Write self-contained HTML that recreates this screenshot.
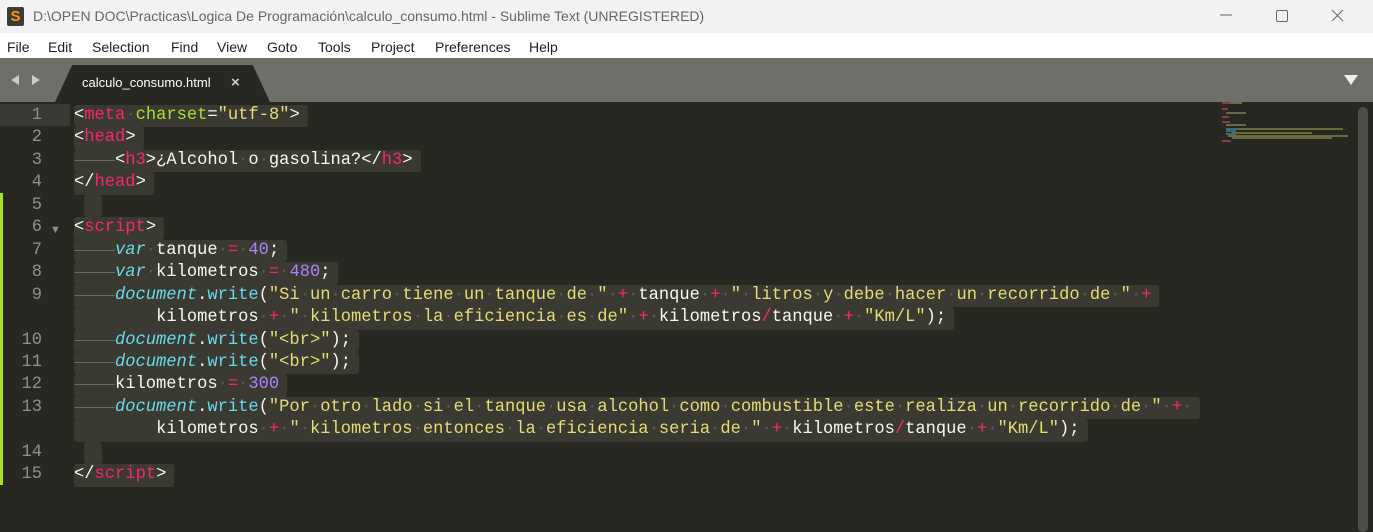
<!DOCTYPE html>
<html><head><meta charset="utf-8">
<style>
*{margin:0;padding:0;box-sizing:border-box}
body{width:1373px;height:532px;overflow:hidden;background:#272822;font-family:"Liberation Sans",sans-serif;position:relative}
#title{position:absolute;left:0;top:0;width:1373px;height:33px;background:#f2f2f2;color:#666;font-size:14px;line-height:33px}
#title .logo{position:absolute;left:7px;top:7px;width:17px;height:19px;background:#3b3b3b;border-radius:2px;color:#ff9800;font-weight:bold;font-size:15px;line-height:19px;text-align:center}
#title .t{position:absolute;left:33px;top:0}
#menu{position:absolute;left:0;top:33px;width:1373px;height:25px;background:#fff;font-size:14px;color:#222;line-height:28px}
#menu span{position:absolute;top:0}
#tabbar{position:absolute;left:0;top:58px;width:1373px;height:44px;background:#6f6e68}
#tab{position:absolute;left:55px;top:65px;width:215px;height:37px;background:#272822;clip-path:polygon(8% 0,92% 0,100% 100%,0 100%);}
#tabt{position:absolute;left:82px;top:75px;color:#fff;font-size:13px}
#tabx{position:absolute;left:231px;top:74px;color:#ccc;font-size:15px;font-weight:bold}
.code{position:absolute;left:0;font-family:"Liberation Mono",monospace;font-size:17.1px;line-height:22.45px;height:22.45px;white-space:pre;color:#f8f8f2}
.ln{position:absolute;left:0;width:42px;text-align:right;color:#8f908a}
.c{position:absolute;left:74px;background:#3a3a32;padding-right:8px;border-radius:3px}
.p{color:#f92672}.g{color:#a6e22e}.y{color:#e6db74}.b{color:#66d9ef}.i{color:#66d9ef;font-style:italic}.n{color:#ae81ff}
.d{color:#5a5a50}
.tb{display:inline-block;width:41px;height:10px;border-bottom:1px solid #6a6a60;vertical-align:top;margin-top:1px}
</style></head><body>
<div id="title"><div class="logo">S</div><span class="t">D:\OPEN DOC\Practicas\Logica De Programación\calculo_consumo.html - Sublime Text (UNREGISTERED)</span>
<svg style="position:absolute;left:1215px;top:8px" width="150" height="16"><line x1="5" y1="7" x2="17" y2="7" stroke="#666"/><rect x="61.5" y="2.5" width="11" height="11" rx="1.5" fill="none" stroke="#666"/><path d="M117 2 L128 13 M128 2 L117 13" stroke="#666"/></svg></div>
<div id="menu"><span style="left:7px">File</span><span style="left:48px">Edit</span><span style="left:92px">Selection</span><span style="left:171px">Find</span><span style="left:217px">View</span><span style="left:267px">Goto</span><span style="left:318px">Tools</span><span style="left:371px">Project</span><span style="left:435px">Preferences</span><span style="left:529px">Help</span></div>
<div id="tabbar"></div>
<svg style="position:absolute;left:10px;top:74px" width="32" height="12"><path d="M1 6 L9 1 L9 11Z M30 6 L22 1 L22 11Z" fill="#c9c9c4"/></svg>
<svg style="position:absolute;left:1343px;top:74px" width="16" height="12"><path d="M1 1 L15 1 L8 11Z" fill="#eee"/></svg>
<div id="tab"></div><div id="tabt">calculo_consumo.html</div><div id="tabx">×</div>
<div style="position:absolute;left:0;top:104px;width:70px;height:22px;background:#3a3933"></div>
<div style="position:absolute;left:0;top:193px;width:3px;height:292px;background:#a6e22e"></div>
<div style="position:absolute;left:1358px;top:107px;width:10px;height:425px;background:#4e4e48;border-radius:5px"></div>
<svg style="position:absolute;left:1222px;top:100px" width="130" height="50"><g fill="#8a3a4a"><rect x="0" y="2" width="14" height="2"/><rect x="0" y="8" width="6" height="2"/><rect x="0" y="16" width="7" height="2"/><rect x="0" y="21" width="8" height="2"/><rect x="0" y="40" width="9" height="2"/></g><g fill="#6a6a40"><rect x="8" y="2" width="12" height="2"/><rect x="4" y="12" width="20" height="2"/><rect x="6" y="28" width="115" height="2"/><rect x="10" y="32" width="80" height="2"/><rect x="6" y="35" width="120" height="2"/><rect x="10" y="37" width="100" height="2"/><rect x="4" y="24" width="20" height="2"/></g><g fill="#3d6a75"><rect x="4" y="28" width="12" height="2"/><rect x="4" y="30" width="10" height="2"/><rect x="4" y="33" width="10" height="2"/></g></svg>
<div style="position:absolute;left:50px;top:224px;color:#8f908a;font-size:11px">▼</div>

<div class="code" style="top:105px"><span class="ln">1</span><span class="c">&lt;<span class="p">meta</span><span class="d">·</span><span class="g">charset</span>=<span class="y">"utf-8"</span>&gt;</span></div>
<div class="code" style="top:127.45px"><span class="ln">2</span><span class="c">&lt;<span class="p">head</span>&gt;</span></div>
<div class="code" style="top:149.9px"><span class="ln">3</span><span class="c"><span class="tb"></span>&lt;<span class="p">h3</span>&gt;¿Alcohol<span class="d">·</span>o<span class="d">·</span>gasolina?&lt;/<span class="p">h3</span>&gt;</span></div>
<div class="code" style="top:172.35px"><span class="ln">4</span><span class="c">&lt;/<span class="p">head</span>&gt;</span></div>
<div class="code" style="top:194.8px"><span class="ln">5</span><span class="c" style="left:84px"> </span></div>
<div class="code" style="top:217.25px"><span class="ln" style="width:42px">6</span><span class="c">&lt;<span class="p">script</span>&gt;</span></div>
<div class="code" style="top:239.7px"><span class="ln">7</span><span class="c"><span class="tb"></span><span class="i">var</span><span class="d">·</span>tanque<span class="d">·</span><span class="p">=</span><span class="d">·</span><span class="n">40</span>;</span></div>
<div class="code" style="top:262.15px"><span class="ln">8</span><span class="c"><span class="tb"></span><span class="i">var</span><span class="d">·</span>kilometros<span class="d">·</span><span class="p">=</span><span class="d">·</span><span class="n">480</span>;</span></div>
<div class="code" style="top:284.6px"><span class="ln">9</span><span class="c"><span class="tb"></span><span class="i">document</span>.<span class="b">write</span>(<span class="y">"Si<span class="d">·</span>un<span class="d">·</span>carro<span class="d">·</span>tiene<span class="d">·</span>un<span class="d">·</span>tanque<span class="d">·</span>de<span class="d">·</span>"</span><span class="d">·</span><span class="p">+</span><span class="d">·</span>tanque<span class="d">·</span><span class="p">+</span><span class="d">·</span><span class="y">"<span class="d">·</span>litros<span class="d">·</span>y<span class="d">·</span>debe<span class="d">·</span>hacer<span class="d">·</span>un<span class="d">·</span>recorrido<span class="d">·</span>de<span class="d">·</span>"</span><span class="d">·</span><span class="p">+</span></span></div>
<div class="code" style="top:307.05px"><span class="c">        kilometros<span class="d">·</span><span class="p">+</span><span class="d">·</span><span class="y">"<span class="d">·</span>kilometros<span class="d">·</span>la<span class="d">·</span>eficiencia<span class="d">·</span>es<span class="d">·</span>de"</span><span class="d">·</span><span class="p">+</span><span class="d">·</span>kilometros<span class="p">/</span>tanque<span class="d">·</span><span class="p">+</span><span class="d">·</span><span class="y">"Km/L"</span>);</span></div>
<div class="code" style="top:329.5px"><span class="ln">10</span><span class="c"><span class="tb"></span><span class="i">document</span>.<span class="b">write</span>(<span class="y">"&lt;br&gt;"</span>);</span></div>
<div class="code" style="top:351.95px"><span class="ln">11</span><span class="c"><span class="tb"></span><span class="i">document</span>.<span class="b">write</span>(<span class="y">"&lt;br&gt;"</span>);</span></div>
<div class="code" style="top:374.4px"><span class="ln">12</span><span class="c"><span class="tb"></span>kilometros<span class="d">·</span><span class="p">=</span><span class="d">·</span><span class="n">300</span></span></div>
<div class="code" style="top:396.85px"><span class="ln">13</span><span class="c"><span class="tb"></span><span class="i">document</span>.<span class="b">write</span>(<span class="y">"Por<span class="d">·</span>otro<span class="d">·</span>lado<span class="d">·</span>si<span class="d">·</span>el<span class="d">·</span>tanque<span class="d">·</span>usa<span class="d">·</span>alcohol<span class="d">·</span>como<span class="d">·</span>combustible<span class="d">·</span>este<span class="d">·</span>realiza<span class="d">·</span>un<span class="d">·</span>recorrido<span class="d">·</span>de<span class="d">·</span>"</span><span class="d">·</span><span class="p">+</span><span class="d">·</span></span></div>
<div class="code" style="top:419.3px"><span class="c">        kilometros<span class="d">·</span><span class="p">+</span><span class="d">·</span><span class="y">"<span class="d">·</span>kilometros<span class="d">·</span>entonces<span class="d">·</span>la<span class="d">·</span>eficiencia<span class="d">·</span>seria<span class="d">·</span>de<span class="d">·</span>"</span><span class="d">·</span><span class="p">+</span><span class="d">·</span>kilometros<span class="p">/</span>tanque<span class="d">·</span><span class="p">+</span><span class="d">·</span><span class="y">"Km/L"</span>);</span></div>
<div class="code" style="top:441.75px"><span class="ln">14</span><span class="c" style="left:84px"> </span></div>
<div class="code" style="top:464.2px"><span class="ln">15</span><span class="c">&lt;/<span class="p">script</span>&gt;</span></div>
</body></html>
